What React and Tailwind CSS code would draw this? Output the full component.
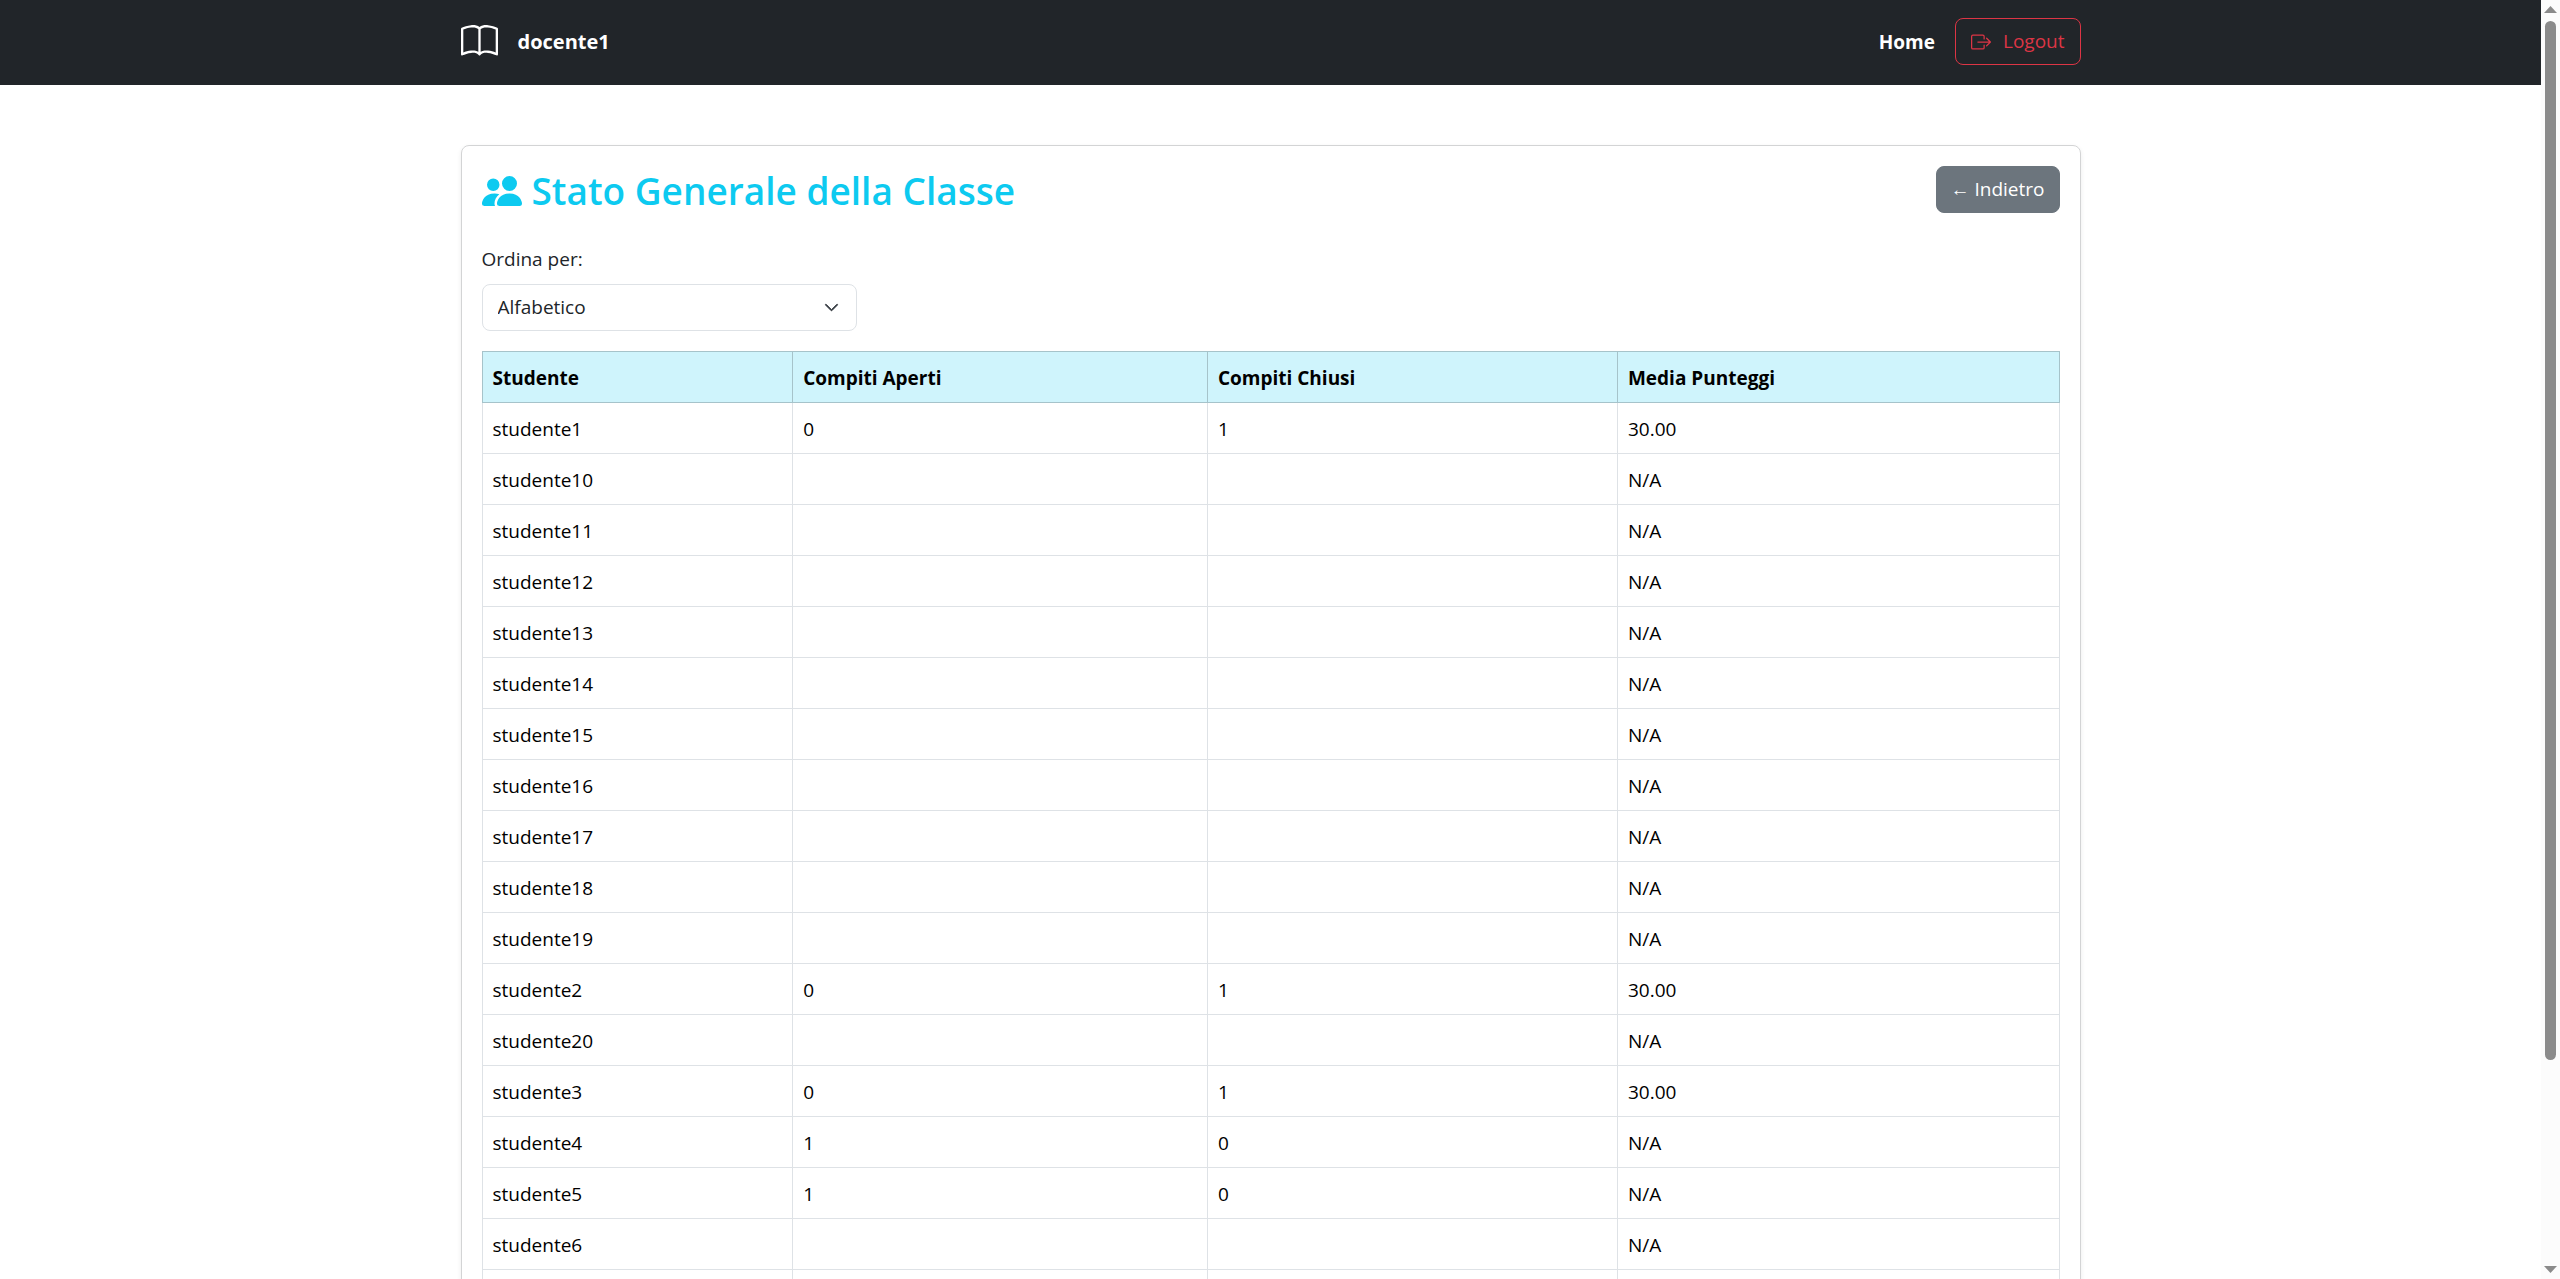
import { BsBook, BsBoxArrowRight, BsChevronDown, BsPeopleFill } from "react-icons/bs";

const students = [
  ["studente1", "0", "1", "30.00"],
  ["studente10", "", "", "N/A"],
  ["studente11", "", "", "N/A"],
  ["studente12", "", "", "N/A"],
  ["studente13", "", "", "N/A"],
  ["studente14", "", "", "N/A"],
  ["studente15", "", "", "N/A"],
  ["studente16", "", "", "N/A"],
  ["studente17", "", "", "N/A"],
  ["studente18", "", "", "N/A"],
  ["studente19", "", "", "N/A"],
  ["studente2", "0", "1", "30.00"],
  ["studente20", "", "", "N/A"],
  ["studente3", "0", "1", "30.00"],
  ["studente4", "1", "0", "N/A"],
  ["studente5", "1", "0", "N/A"],
  ["studente6", "", "", "N/A"],
  ["studente7", "", "", "N/A"],
  ["studente8", "", "", "N/A"],
  ["studente9", "", "", "N/A"],
];

const columns = [
  { title: "Studente", width: "w-[19.7%]" },
  { title: "Compiti Aperti", width: "w-[26.3%]" },
  { title: "Compiti Chiusi", width: "w-[26%]" },
  { title: "Media Punteggi", width: "w-auto" },
];

function Navbar() {
  return (
    <header className="bg-[#212529] pb-5 pt-[18px] text-white">
      <div className="mx-auto flex max-w-[1650px] items-center justify-between px-[15px]">
        <a href="#" className="flex items-center gap-5 text-[20px] font-bold">
          <BsBook className="size-[37px]" />
          docente1
        </a>
        <nav className="flex items-center gap-5">
          <a href="#" className="font-bold">
            Home
          </a>
          <button
            type="button"
            className="flex items-center gap-3 rounded-[8px] border border-[#dc3545] px-[15px] py-2 leading-[29px] text-[#dc3545]"
          >
            <BsBoxArrowRight className="size-5" />
            Logout
          </button>
        </nav>
      </div>
    </header>
  );
}

function SortSelect() {
  return (
    <div className="mt-7">
      <label htmlFor="sort" className="block">
        Ordina per:
      </label>
      <div className="relative mt-2.5 w-[375px] max-w-full">
        <select
          id="sort"
          defaultValue="Alfabetico"
          className="block w-full appearance-none rounded-[8px] border border-[#dee2e6] bg-white px-[15px] py-2 leading-[29px]"
        >
          <option>Alfabetico</option>
        </select>
        <BsChevronDown
          className="pointer-events-none absolute right-[18px] top-4 size-[15px] text-[#343a40]"
          strokeWidth="1"
        />
      </div>
    </div>
  );
}

function StudentTable() {
  return (
    <table className="mt-5 w-full table-fixed border-collapse text-left text-black">
      <thead className="bg-[#cff4fc]">
        <tr>
          {columns.map((column) => (
            <th
              key={column.title}
              className={`border border-[#a6c3ca] px-2.5 pb-[9px] pt-[11px] font-bold ${column.width}`}
            >
              {column.title}
            </th>
          ))}
        </tr>
      </thead>
      <tbody>
        {students.map((row) => (
          <tr key={row[0]} className="h-[51px]">
            {row.map((value, index) => (
              <td key={index} className="border border-[#dee2e6] px-2.5 pb-[9px] pt-[11px]">
                {value}
              </td>
            ))}
          </tr>
        ))}
      </tbody>
    </table>
  );
}

function Scrollbar() {
  return (
    <div aria-hidden="true" className="flex w-[19px] shrink-0 flex-col items-center bg-[#fcfcfc] py-1.5">
      <svg viewBox="0 0 13 7" className="h-[7px] w-[13px] fill-[#8b8b8b]">
        <path d="M6.500 0 13 7H0Z" />
      </svg>
      <div className="w-full flex-1 px-1 py-2">
        <div className="h-[84%] rounded-full bg-[#8b8b8b]" />
      </div>
      <svg viewBox="0 0 13 7" className="h-[7px] w-[13px] fill-[#8b8b8b]">
        <path d="M0 0H13L6.500 7Z" />
      </svg>
    </div>
  );
}

export default function App() {
  return (
    <div className="flex h-screen bg-white font-['Open_Sans','Noto_Sans',sans-serif] text-[19px] leading-[30px] text-[#212529]">
      <div className="min-w-0 flex-1 overflow-y-auto [scrollbar-width:none]">
        <Navbar />
        <main className="mx-auto max-w-[1650px] px-[15px] py-[60px]">
          <section className="rounded-[8px] border border-[#d3d4d5] p-5 shadow-[0_2px_5px_rgba(0,0,0,0.075)]">
            <div className="flex items-start justify-between">
              <h1 className="flex items-center gap-2.5 text-[37px] font-semibold leading-[50px] text-[#0dcaf0]">
                <BsPeopleFill className="size-10" />
                Stato Generale della Classe
              </h1>
              <a
                href="#"
                className="rounded-[8px] border border-[#6c757d] bg-[#6c757d] px-3.5 py-2 leading-[29px] text-white"
              >
                ← Indietro
              </a>
            </div>
            <SortSelect />
            <StudentTable />
          </section>
        </main>
      </div>
      <Scrollbar />
    </div>
  );
}
